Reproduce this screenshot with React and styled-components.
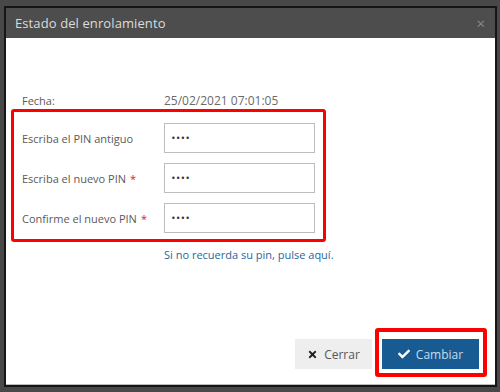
import React from "react";
import styled, { createGlobalStyle } from "styled-components";
import { FaCheck, FaTimes } from "react-icons/fa";

const Global = createGlobalStyle`
  html, body { margin: 0; padding: 0; background: #484848; }
  body { font-family: "Open Sans", "Liberation Sans", sans-serif; }
`;

const Page = styled.div`
  width: 500px;
  height: 392px;
  padding: 6px 0 0 4px;
  box-sizing: border-box;
`;

const Modal = styled.div`
  width: 493px;
  height: 381px;
  box-sizing: border-box;
  border: 2px solid #151515;
  display: flex;
  flex-direction: column;
  background: #fff;
`;

const Header = styled.div`
  height: 30px;
  flex: none;
  background: #4d4d4d;
  display: flex;
  align-items: center;
  justify-content: space-between;
  padding: 0 10px 0 9px;
`;

const Title = styled.div`
  color: #dcdcdc;
  font-size: 13px;
  letter-spacing: 0.1px;
`;

const Close = styled.span`
  color: #8a8a8a;
  font-size: 15px;
  line-height: 1;
`;

const Body = styled.div`
  flex: 1;
  display: flex;
  flex-direction: column;
  padding: 54px 0 0 5px;
  border-bottom: 1px solid #bdbdbd;
`;

const Row = styled.div`
  display: grid;
  grid-template-columns: 142px 151px;
  align-items: center;
  height: 40px;
`;

const FechaRow = styled(Row)`
  padding-left: 11px;
  height: 17px;
`;

const Label = styled.label`
  font-size: 11px;
  color: #5a5a5a;
`;

const Value = styled.span`
  font-size: 12px;
  color: #6a6a6a;
`;

const Req = styled.span`
  color: #e02020;
  margin-left: 4px;
`;

const Highlight = styled.div`
  width: 315px;
  box-sizing: border-box;
  border: 3px solid #ff0000;
  border-radius: 3px;
  padding: 6px 0 1px 8px;
`;

const Input = styled.input`
  width: 151px;
  height: 30px;
  box-sizing: border-box;
  border: 1px solid #bdbdbd;
  padding: 0 6px;
  font-size: 8px;
  color: #333;
  font-family: "DejaVu Sans", sans-serif;
  outline: none;
`;

const LinkText = styled.a`
  margin: 5px 0 0 153px;
  font-size: 11px;
  color: #2468a0;
  text-decoration: none;
  align-self: flex-start;
`;

const Footer = styled.div`
  margin-top: auto;
  display: flex;
  justify-content: flex-end;
  align-items: flex-end;
  gap: 3px;
  padding: 0 8px 7px 0;
`;

const Button = styled.button`
  height: 30px;
  width: ${(p) => p.$w}px;
  border: none;
  border-radius: 0;
  background: ${(p) => (p.$primary ? "#175b92" : "#eeeeee")};
  color: ${(p) => (p.$primary ? "#c9dbea" : "#555")};
  font-family: "Open Sans", "Liberation Sans", sans-serif;
  font-size: 12px;
  display: flex;
  align-items: center;
  justify-content: center;
  gap: 6px;
  padding: 0;
  margin-bottom: ${(p) => p.$mb || 0}px;
  svg { color: ${(p) => (p.$primary ? "#ffffff" : "#222")}; }
`;

const Annot = styled.div`
  border: 4px solid #ff0000;
  border-radius: 3px;
  padding: 7px 4px 4px 3px;
`;

export default function App() {
  const fields = [
    { label: "Escriba el PIN antiguo", req: false },
    { label: "Escriba el nuevo PIN", req: true },
    { label: "Confirme el nuevo PIN", req: true },
  ];
  return (
    <>
      <Global />
      <Page>
        <Modal>
          <Header>
            <Title>Estado del enrolamiento</Title>
            <Close>×</Close>
          </Header>
          <Body>
            <FechaRow>
              <Label>Fecha:</Label>
              <Value>25/02/2021 07:01:05</Value>
            </FechaRow>
            <Highlight>
              {fields.map((f) => (
                <Row key={f.label}>
                  <Label>
                    {f.label}
                    {f.req && <Req>*</Req>}
                  </Label>
                  <Input type="password" defaultValue="1234" readOnly />
                </Row>
              ))}
            </Highlight>
            <LinkText href="#">Si no recuerda su pin, pulse aquí.</LinkText>
            <Footer>
              <Button $w={77} $mb={8}>
                <FaTimes size={11} />
                Cerrar
              </Button>
              <Annot>
                <Button $w={97} $primary>
                  <FaCheck size={12} />
                  Cambiar
                </Button>
              </Annot>
            </Footer>
          </Body>
        </Modal>
      </Page>
    </>
  );
}
